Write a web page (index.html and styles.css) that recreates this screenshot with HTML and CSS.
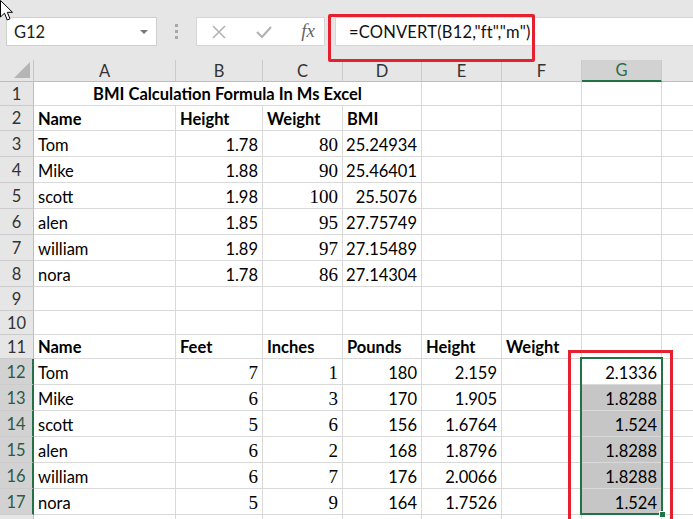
FILE: index.html
```html
<!DOCTYPE html>
<html>
<head>
<meta charset="utf-8">
<link rel="stylesheet" href="styles.css">
</head>
<body>
<div class="page">
  <div class="toolbar">
    <div class="namebox"><span>G12</span><span class="caret"></span></div>
    <div class="grip"><i></i><i></i><i></i></div>
    <div class="btns">
      <svg class="ico" width="16" height="16" viewBox="0 0 16 16"><path d="M2 2 L14 14 M14 2 L2 14" stroke="#b3b3b3" stroke-width="1.6" fill="none"/></svg>
      <svg class="ico" width="18" height="16" viewBox="0 0 18 16"><path d="M2 8 L7 13 L16 3" stroke="#b3b3b3" stroke-width="2.2" fill="none"/></svg>
      <span class="fx">fx</span>
    </div>
    <div class="formula">=CONVERT(B12,"ft","m")</div>
  </div>

  <div class="sheet">
    <div class="corner"><span class="tri"></span></div>
    <div class="ch">A</div><div class="ch">B</div><div class="ch">C</div><div class="ch">D</div><div class="ch">E</div><div class="ch">F</div><div class="ch sel">G</div><div class="ch"></div>

    <div class="rh">1</div><div class="c title">BMI Calculation Formula In Ms Excel</div><div class="c"></div><div class="c"></div><div class="c"></div><div class="c"></div>
    <div class="rh">2</div><div class="c b">Name</div><div class="c b">Height</div><div class="c b">Weight</div><div class="c b">BMI</div><div class="c"></div><div class="c"></div><div class="c"></div><div class="c"></div>

    <div class="rh">3</div><div class="c">Tom</div><div class="c r">1.78</div><div class="c r s">80</div><div class="c r">25.24934</div><div class="c"></div><div class="c"></div><div class="c"></div><div class="c"></div>
    <div class="rh">4</div><div class="c">Mike</div><div class="c r">1.88</div><div class="c r s">90</div><div class="c r">25.46401</div><div class="c"></div><div class="c"></div><div class="c"></div><div class="c"></div>
    <div class="rh">5</div><div class="c">scott</div><div class="c r">1.98</div><div class="c r s">100</div><div class="c r">25.5076</div><div class="c"></div><div class="c"></div><div class="c"></div><div class="c"></div>
    <div class="rh">6</div><div class="c">alen</div><div class="c r">1.85</div><div class="c r s">95</div><div class="c r">27.75749</div><div class="c"></div><div class="c"></div><div class="c"></div><div class="c"></div>
    <div class="rh">7</div><div class="c">william</div><div class="c r">1.89</div><div class="c r s">97</div><div class="c r">27.15489</div><div class="c"></div><div class="c"></div><div class="c"></div><div class="c"></div>
    <div class="rh">8</div><div class="c">nora</div><div class="c r">1.78</div><div class="c r s">86</div><div class="c r">27.14304</div><div class="c"></div><div class="c"></div><div class="c"></div><div class="c"></div>
    <div class="rh">9</div><div class="c"></div><div class="c"></div><div class="c"></div><div class="c"></div><div class="c"></div><div class="c"></div><div class="c"></div><div class="c"></div>
    <div class="rh">10</div><div class="c"></div><div class="c"></div><div class="c"></div><div class="c"></div><div class="c"></div><div class="c"></div><div class="c"></div><div class="c"></div>

    <div class="rh">11</div><div class="c b">Name</div><div class="c b">Feet</div><div class="c b">Inches</div><div class="c b">Pounds</div><div class="c b">Height</div><div class="c b">Weight</div><div class="c"></div><div class="c"></div>
    <div class="rh rsel">12</div><div class="c">Tom</div><div class="c r s">7</div><div class="c r s">1</div><div class="c r">180</div><div class="c r">2.159</div><div class="c"></div><div class="c r">2.1336</div><div class="c"></div>
    <div class="rh rsel">13</div><div class="c">Mike</div><div class="c r s">6</div><div class="c r s">3</div><div class="c r">170</div><div class="c r">1.905</div><div class="c"></div><div class="c r hl">1.8288</div><div class="c"></div>
    <div class="rh rsel">14</div><div class="c">scott</div><div class="c r s">5</div><div class="c r s">6</div><div class="c r">156</div><div class="c r">1.6764</div><div class="c"></div><div class="c r hl">1.524</div><div class="c"></div>
    <div class="rh rsel">15</div><div class="c">alen</div><div class="c r s">6</div><div class="c r s">2</div><div class="c r">168</div><div class="c r">1.8796</div><div class="c"></div><div class="c r hl">1.8288</div><div class="c"></div>
    <div class="rh rsel">16</div><div class="c">william</div><div class="c r s">6</div><div class="c r s">7</div><div class="c r">176</div><div class="c r">2.0066</div><div class="c"></div><div class="c r hl">1.8288</div><div class="c"></div>
    <div class="rh rsel">17</div><div class="c">nora</div><div class="c r s">5</div><div class="c r s">9</div><div class="c r">164</div><div class="c r">1.7526</div><div class="c"></div><div class="c r hl">1.524</div><div class="c"></div>
    <div class="rh"></div><div class="c"></div><div class="c"></div><div class="c"></div><div class="c"></div><div class="c"></div><div class="c"></div><div class="c"></div><div class="c"></div>

    <div class="selbox"><span class="handle"></span></div>
  </div>

  <div class="redbox redtop"></div>
  <div class="redbox redcol"></div>
  <svg class="cursor" width="16" height="24" viewBox="0 0 16 24"><path d="M0.5 0.5 L0.5 17 L4.5 13.2 L7.3 20 L10 18.8 L7.3 12.3 L12.5 12.3 Z" fill="#fff" stroke="#000" stroke-width="1"/></svg>
</div>
</body>
</html>
```

FILE: styles.css
```css
* { box-sizing: border-box; }
html, body { margin: 0; padding: 0; }
body { background: #fff; font-family: Lato, "Open Sans", sans-serif; color: #000; }
.page { position: relative; width: 693px; height: 519px; overflow: hidden; background: #fff; }

.toolbar { height: 60px; background: #e6e6e6; display: flex; align-items: flex-start; padding-top: 17px; }
.namebox { margin-left: 6px; width: 151px; height: 29px; background: #fff; border: 1px solid #cfcfcf; display: flex; align-items: center; justify-content: space-between; padding: 0 8px 0 7px; font-size: 16.5px; color: #222; }
.caret { width: 0; height: 0; border-left: 4px solid transparent; border-right: 4px solid transparent; border-top: 4px solid #777; }
.grip { width: 39px; height: 29px; display: flex; flex-direction: column; align-items: center; justify-content: center; gap: 3px; }
.grip i { display: block; width: 3px; height: 3px; background: #a8a8a8; }
.btns { width: 129px; height: 29px; background: #fff; border: 1px solid #d6d6d6; display: flex; align-items: center; justify-content: space-between; padding: 0 9px 0 14px; }
.fx { font-family: "Liberation Serif", serif; font-style: italic; font-size: 19px; color: #666; margin-bottom: 2px; }
.formula { margin-left: 10px; flex: 1; height: 29px; background: #fff; border: 1px solid #d6d6d6; border-right: none; font-size: 16.5px; letter-spacing: 0.2px; color: #111; display: flex; align-items: center; padding-left: 13px; }

.sheet { position: relative; display: grid; grid-template-columns: 34px 142px 87px 80px 79px 80px 80px 80px 60px; grid-template-rows: 22px 24px 25px repeat(6, 26px) 24px 24px 24px repeat(6, 26px) 26px; }
.corner { background: #e6e6e6; border-right: 1px solid #c6c6c6; border-bottom: 1px solid #bdbdbd; position: relative; }
.tri { position: absolute; right: 3px; bottom: 3px; width: 0; height: 0; border-left: 16px solid transparent; border-bottom: 16px solid #b5b5b5; }
.ch { background: #e6e6e6; border-right: 1px solid #cbcbcb; border-bottom: 1px solid #bdbdbd; display: flex; align-items: center; justify-content: center; font-size: 16.5px; color: #333; }
.ch.sel { background: #d2d2d2; border-bottom: 2px solid #217346; color: #2e6b4a; }
.rh { background: #e6e6e6; border-right: 1px solid #bdbdbd; border-bottom: 1px solid #cbcbcb; display: flex; align-items: center; justify-content: center; font-size: 16.5px; color: #333; }
.rh.rsel { background: #d2d2d2; border-right: 2px solid #217346; color: #2e5a44; }
.c { border-right: 1px solid #d9d9d9; border-bottom: 1px solid #d9d9d9; display: flex; align-items: flex-end; padding: 0 4px 1px 4px; font-size: 16.5px; white-space: nowrap; line-height: 20px; }
.c.r { justify-content: flex-end; }
.c.b { font-weight: bold; }
.c.s { font-family: "Liberation Serif", serif; font-size: 19px; }
.c.hl { background: #c6c6c6; }
.title { grid-column: span 4; justify-content: center; font-weight: bold; }

.selbox { position: absolute; left: 580px; top: 297px; width: 83px; height: 158px; border: 2px solid #217346; pointer-events: none; }
.handle { position: absolute; right: -5px; bottom: -5px; width: 7px; height: 7px; background: #217346; border: 1px solid #fff; }

.redbox { position: absolute; border: 3px solid #e5202f; }
.redtop { left: 328px; top: 14px; width: 207px; height: 48px; border-radius: 2px; }
.redcol { left: 568px; top: 350px; width: 105px; height: 200px; }
.cursor { position: absolute; left: 0; top: 0; }
```
